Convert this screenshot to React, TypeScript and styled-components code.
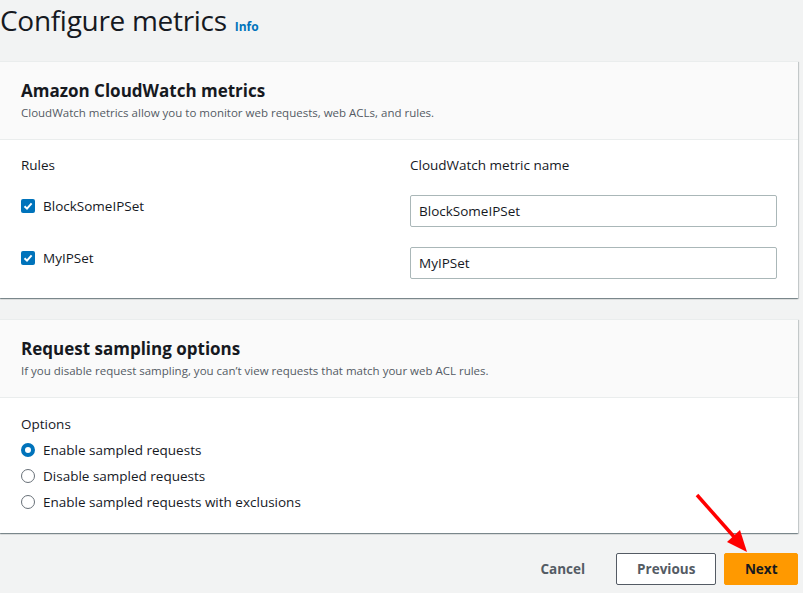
import { ReactElement, Fragment } from 'react';
import styled, { createGlobalStyle } from 'styled-components';

const GlobalStyle = createGlobalStyle`
  html, body {
    margin: 0;
    padding: 0;
    background: #f2f3f3;
  }
  body {
    font-family: 'Open Sans', 'Noto Sans', Arial, sans-serif;
    color: #16191f;
  }
`;

const Page = styled.div`
  position: relative;
  width: 803px;
  height: 593px;
  box-sizing: border-box;
  padding: 2px 5px 0 0;
  overflow: hidden;
`;

const TitleRow = styled.div`
  display: flex;
  align-items: baseline;
  gap: 8px;
  height: 36px;
  margin-bottom: 23px;

  h1 {
    margin: 0;
    font-size: 28px;
    font-weight: 400;
    line-height: 36px;
    letter-spacing: -0.3px;
  }
`;

const InfoLink = styled.a`
  font-size: 12px;
  font-weight: 700;
  color: #0073bb;
  text-decoration: none;
`;

const Panel = styled.section`
  background: #fff;
  border-top: 1px solid #eaeded;
  box-shadow: 0 1px 1px 0 rgba(0, 28, 36, 0.3), 1px 1px 1px 0 rgba(0, 28, 36, 0.15),
    -1px 1px 1px 0 rgba(0, 28, 36, 0.15);
  margin-bottom: 21px;
`;

const PanelHeader = styled.header`
  background: #fafafa;
  border-bottom: 1px solid #eaeded;
  padding: 18px 21px 18px;

  h2 {
    margin: 0;
    font-size: 17px;
    font-weight: 700;
    line-height: 22px;
  }

  p {
    margin: 3px 0 0;
    font-size: 11.5px;
    line-height: 16px;
    color: #545b64;
  }
`;

const PanelBody = styled.div<{ $pad?: string }>`
  padding: ${(p) => p.$pad ?? '15px 21px 19px'};
`;

const MetricsGrid = styled.div`
  display: grid;
  grid-template-columns: 369px 367px;
  column-gap: 20px;
  row-gap: 20px;
`;

const FieldLabel = styled.div`
  font-size: 13.5px;
  line-height: 20px;
  color: #16191f;
`;

const CheckRow = styled.label`
  display: flex;
  align-items: center;
  gap: 8px;
  height: 22px;
  font-size: 13.5px;
  color: #16191f;
  margin-bottom: 10px;
`;

const CheckBox = styled.span`
  width: 14px;
  height: 14px;
  border-radius: 2px;
  background: #0073bb;
  display: flex;
  align-items: center;
  justify-content: center;
  flex-shrink: 0;
`;

const TextInput = styled.input`
  box-sizing: border-box;
  width: 100%;
  height: 32px;
  border: 1px solid #aab7b8;
  border-radius: 2px;
  padding: 0 8px;
  font-family: inherit;
  font-size: 13.5px;
  color: #16191f;
  background: #fff;
  outline: none;
`;

const RadioList = styled.div`
  display: flex;
  flex-direction: column;
  margin-top: 3px;
`;

const RadioRow = styled.label`
  display: flex;
  align-items: center;
  gap: 8px;
  height: 26px;
  font-size: 13.5px;
  color: #16191f;
`;

const RadioDot = styled.span<{ $on?: boolean }>`
  box-sizing: border-box;
  width: 14px;
  height: 14px;
  border-radius: 50%;
  flex-shrink: 0;
  border: ${(p) => (p.$on ? '4px solid #0073bb' : '1.5px solid #687078')};
  background: #fff;
`;

const Footer = styled.div`
  display: flex;
  justify-content: flex-end;
  align-items: center;
  gap: 8px;
  margin-top: -1px;
`;

const Button = styled.button<{ $variant: 'link' | 'normal' | 'primary' }>`
  box-sizing: border-box;
  height: 32px;
  padding: 0
    ${(p) => (p.$variant === 'primary' ? '19.5px' : p.$variant === 'link' ? '22px' : '20px')};
  font-family: inherit;
  font-size: 13.5px;
  font-weight: 700;
  border-radius: 2px;
  cursor: pointer;
  border: 1px solid
    ${(p) => (p.$variant === 'normal' ? '#545b64' : p.$variant === 'primary' ? '#ff9900' : 'transparent')};
  background: ${(p) => (p.$variant === 'primary' ? '#ff9900' : p.$variant === 'normal' ? '#fff' : 'transparent')};
  color: ${(p) => (p.$variant === 'primary' ? '#16191f' : '#545b64')};
  min-width: ${(p) => (p.$variant === 'normal' ? '100px' : 'auto')};
`;

const ArrowLayer = styled.svg`
  position: absolute;
  left: 0;
  top: 0;
  pointer-events: none;
`;

const rules = ['BlockSomeIPSet', 'MyIPSet'];
const options = ['Enable sampled requests', 'Disable sampled requests', 'Enable sampled requests with exclusions'];

function Check(): ReactElement {
  return (
    <CheckBox>
      <svg width="10" height="10" viewBox="0 0 10 10">
        <path d="M1.5 5.2 L4 7.6 L8.6 2.4" fill="none" stroke="#fff" strokeWidth="2" />
      </svg>
    </CheckBox>
  );
}

export default function App(): ReactElement {
  return (
    <Page>
      <GlobalStyle />
      <TitleRow>
        <h1>Configure metrics</h1>
        <InfoLink href="#">Info</InfoLink>
      </TitleRow>

      <Panel>
        <PanelHeader>
          <h2>Amazon CloudWatch metrics</h2>
          <p>CloudWatch metrics allow you to monitor web requests, web ACLs, and rules.</p>
        </PanelHeader>
        <PanelBody>
          <MetricsGrid>
            <FieldLabel>Rules</FieldLabel>
            <FieldLabel>CloudWatch metric name</FieldLabel>
            {rules.map((r) => (
              <Fragment key={r}>
                <CheckRow>
                  <Check />
                  {r}
                </CheckRow>
                <TextInput defaultValue={r} readOnly />
              </Fragment>
            ))}
          </MetricsGrid>
        </PanelBody>
      </Panel>

      <Panel>
        <PanelHeader>
          <h2>Request sampling options</h2>
          <p>If you disable request sampling, you can’t view requests that match your web ACL rules.</p>
        </PanelHeader>
        <PanelBody $pad="16px 21px 18px">
          <FieldLabel>Options</FieldLabel>
          <RadioList>
            {options.map((o, i) => (
              <RadioRow key={o}>
                <RadioDot $on={i === 0} />
                {o}
              </RadioRow>
            ))}
          </RadioList>
        </PanelBody>
      </Panel>

      <Footer>
        <Button $variant="link">Cancel</Button>
        <Button $variant="normal">Previous</Button>
        <Button $variant="primary">Next</Button>
      </Footer>

      <ArrowLayer width="803" height="593" viewBox="0 0 803 593">
        <line x1="697" y1="495" x2="736" y2="539" stroke="#f00" strokeWidth="3.5" />
        <polygon points="747,552 727,542 740,530" fill="#f00" />
      </ArrowLayer>
    </Page>
  );
}
